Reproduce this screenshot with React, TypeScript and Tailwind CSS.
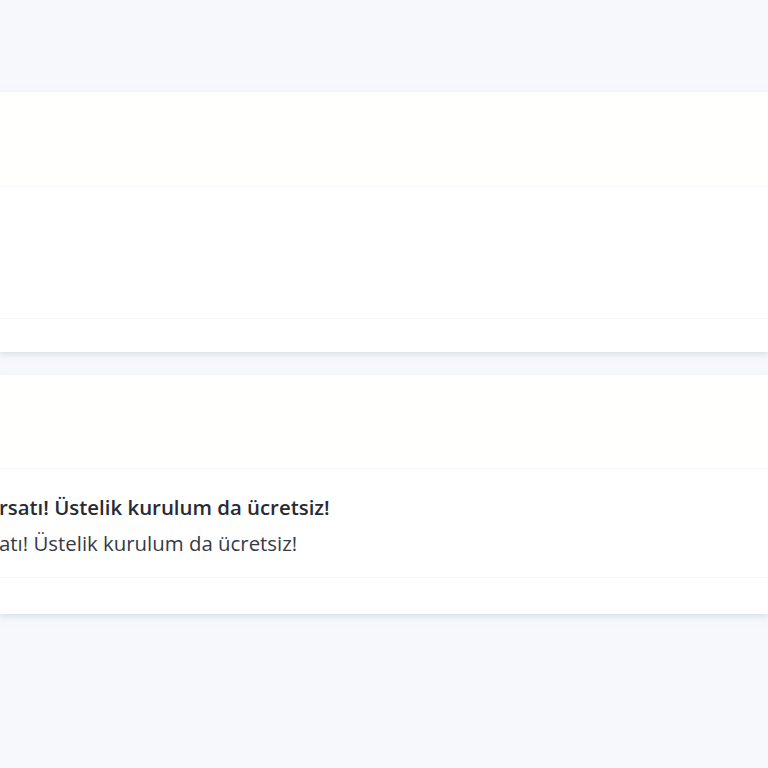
const rows = [
  { title: 'rsatı! Üstelik kurulum da ücretsiz!', sub: 'atı! Üstelik kurulum da ücretsiz!' },
]

export default function App() {
  return (
    <div className="min-h-[768px] w-[768px] overflow-hidden bg-[#f7f8fb] pt-[92px] font-['Open_Sans',sans-serif]">
      {/* kart 1 */}
      <div className="bg-white shadow-[0_3px_6px_rgba(200,210,225,0.6)]">
        <div className="h-[95px] bg-[#fffffd] border-b border-[#f7f7f7]" />
        <div className="h-[132px] border-b border-[#f7f7f7]" />
        <div className="h-[33px]" />
      </div>

      {/* kart 2 */}
      <div className="mt-[23px] bg-white shadow-[0_3px_6px_rgba(200,210,225,0.6)]">
        <div className="h-[94px] bg-[#fffffd] border-b border-[#f7f7f7]" />
        <div className="h-[109px] border-b border-[#f7f7f7] pt-[23px]">
          {rows.map((r, i) => (
            <div key={i}>
              <p className="ml-[-1px] whitespace-nowrap text-[20.4px] font-semibold leading-[30px] text-[#262b36]">
                {r.title}
              </p>
              <p className="ml-[-1px] mt-[6px] whitespace-nowrap text-[20.4px] leading-[30px] text-[#343a46]">
                {r.sub}
              </p>
            </div>
          ))}
        </div>
        <div className="h-[36px]" />
      </div>
    </div>
  )
}
